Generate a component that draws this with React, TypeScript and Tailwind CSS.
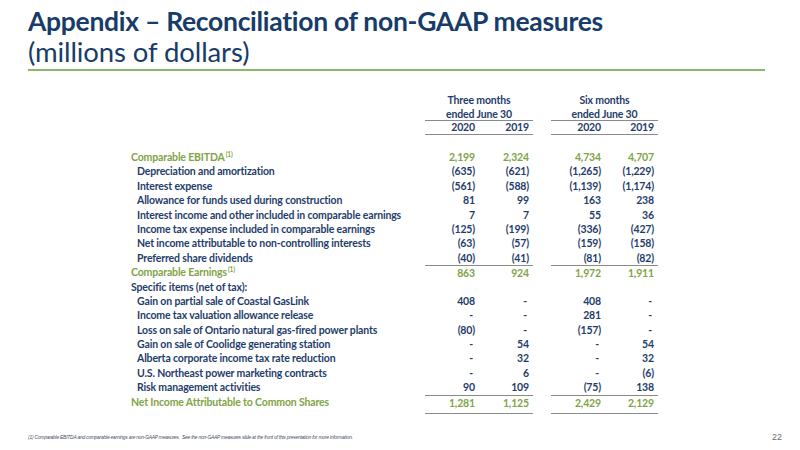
import React from 'react';

type Row = {
  label: string;
  sup?: boolean;
  kind: 'green' | 'item' | 'head';
  v?: string[];
  top?: boolean;
  bottom?: boolean;
};

const rows: Row[] = [
  { label: 'Comparable EBITDA', sup: true, kind: 'green', v: ['2,199', '2,324', '4,734', '4,707'] },
  { label: 'Depreciation and amortization', kind: 'item', v: ['(635)', '(621)', '(1,265)', '(1,229)'] },
  { label: 'Interest expense', kind: 'item', v: ['(561)', '(588)', '(1,139)', '(1,174)'] },
  { label: 'Allowance for funds used during construction', kind: 'item', v: ['81', '99', '163', '238'] },
  { label: 'Interest income and other included in comparable earnings', kind: 'item', v: ['7', '7', '55', '36'] },
  { label: 'Income tax expense included in comparable earnings', kind: 'item', v: ['(125)', '(199)', '(336)', '(427)'] },
  { label: 'Net income attributable to non-controlling interests', kind: 'item', v: ['(63)', '(57)', '(159)', '(158)'] },
  { label: 'Preferred share dividends', kind: 'item', v: ['(40)', '(41)', '(81)', '(82)'] },
  { label: 'Comparable Earnings', sup: true, kind: 'green', v: ['863', '924', '1,972', '1,911'], top: true },
  { label: 'Specific items (net of tax):', kind: 'head' },
  { label: 'Gain on partial sale of Coastal GasLink', kind: 'item', v: ['408', '-', '408', '-'] },
  { label: 'Income tax valuation allowance release', kind: 'item', v: ['-', '-', '281', '-'] },
  { label: 'Loss on sale of Ontario natural gas-fired power plants', kind: 'item', v: ['(80)', '-', '(157)', '-'] },
  { label: 'Gain on sale of Coolidge generating station', kind: 'item', v: ['-', '54', '-', '54'] },
  { label: 'Alberta corporate income tax rate reduction', kind: 'item', v: ['-', '32', '-', '32'] },
  { label: 'U.S. Northeast power marketing contracts', kind: 'item', v: ['-', '6', '-', '(6)'] },
  { label: 'Risk management activities', kind: 'item', v: ['90', '109', '(75)', '138'] },
  { label: 'Net Income Attributable to Common Shares', kind: 'green', v: ['1,281', '1,125', '2,429', '2,129'], top: true, bottom: true },
];

function Num({ value, top, bottom, green }: { value: string; top?: boolean; bottom?: boolean; green?: boolean }) {
  return (
    <div
      className={
        'text-right pr-[4px] ' +
        (value === '-' ? 'pr-[6px] ' : '') +
        (green ? 'text-[#7fa446] ' : 'text-[#1f3d6b] ') +
        (top ? 'border-t border-[#8a8a8a] ' : '') +
        (bottom ? 'border-b border-[#8a8a8a] ' : '')
      }
    >
      {value}
    </div>
  );
}

export default function App() {
  return (
    <div className="w-[800px] h-[450px] bg-white overflow-hidden flex flex-col font-['Lato',sans-serif]">
      <div className="pl-[28px] pt-[5px]">
        <h1 className="text-[26.5px] leading-[32px] font-bold text-[#173c6a] tracking-[-0.3px]">
          Appendix – Reconciliation of non-GAAP measures
        </h1>
        <div className="text-[27.5px] leading-[30px] text-[#173c6a] tracking-[-0.1px]">(millions of dollars)</div>
      </div>
      <div className="ml-[28px] mt-[2px] w-[737px] h-[2px] bg-[#8db66b]" />

      <div className="ml-[131px] mt-[22px] text-[10.5px] font-bold tracking-[-0.15px] text-[#1f3d6b]">
        <div className="grid grid-cols-[294px_108px_18px_107px] leading-[14px]">
          <div />
          <div className="text-center">Three months</div>
          <div />
          <div className="text-center">Six months</div>
          <div />
          <div className="text-center border-b border-[#8a8a8a] h-[14px]">ended June 30</div>
          <div />
          <div className="text-center border-b border-[#8a8a8a] h-[14px]">ended June 30</div>
        </div>
        <div className="grid grid-cols-[294px_54px_54px_18px_54px_53px] leading-[13px] h-[13px]">
          <div />
          <div className="text-right pr-[4px] border-b border-[#8a8a8a] h-[14px]">2020</div>
          <div className="text-right pr-[4px] border-b border-[#8a8a8a] h-[14px]">2019</div>
          <div />
          <div className="text-right pr-[4px] border-b border-[#8a8a8a] h-[14px]">2020</div>
          <div className="text-right pr-[4px] border-b border-[#8a8a8a] h-[14px]">2019</div>
        </div>

        <div className="mt-[16px] flex flex-col">
          {rows.map((r) => {
            const green = r.kind === 'green';
            return (
              <div
                key={r.label}
                className={
                  'grid grid-cols-[294px_54px_54px_18px_54px_53px] leading-[14.4px] ' +
                  (r.bottom ? 'h-[19px]' : 'h-[14.4px]')
                }
              >
                <div
                  className={
                    (r.kind === 'item' ? 'pl-[6px] ' : '') +
                    (green ? 'text-[#7fa446]' : 'text-[#1f3d6b]')
                  }
                >
                  {r.label}
                  {r.sup && <sup className="text-[6.5px] ml-[1px] top-[-4px]">(1)</sup>}
                </div>
                {r.v ? (
                  <>
                    <Num value={r.v[0]} top={r.top} bottom={r.bottom} green={green} />
                    <Num value={r.v[1]} top={r.top} bottom={r.bottom} green={green} />
                    <div />
                    <Num value={r.v[2]} top={r.top} bottom={r.bottom} green={green} />
                    <Num value={r.v[3]} top={r.top} bottom={r.bottom} green={green} />
                  </>
                ) : null}
              </div>
            );
          })}
        </div>
      </div>

      <div className="mt-auto mb-[6px] flex items-center justify-between pl-[28px] pr-[18px] font-['Liberation_Sans',sans-serif]">
        <div className="text-[6px] italic text-[#3f4d66] tracking-[-0.25px] origin-left scale-x-[0.81] whitespace-nowrap">
          (1) Comparable EBITDA and comparable earnings are non-GAAP measures.&nbsp; See the non-GAAP measures slide at the front of this presentation for more information.
        </div>
        <div className="text-[9px] text-[#6b6b6b]">22</div>
      </div>
    </div>
  );
}
